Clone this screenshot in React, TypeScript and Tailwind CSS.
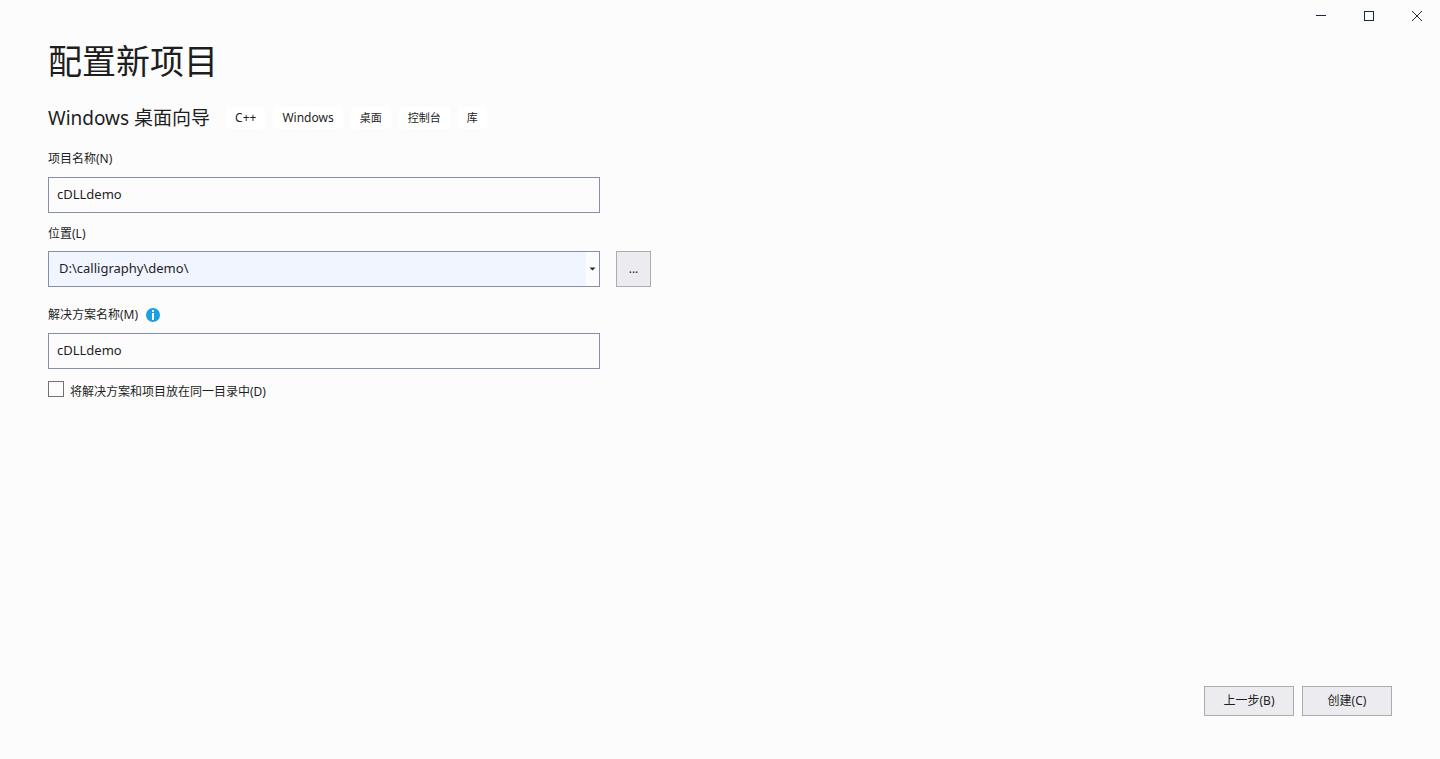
import { useState } from 'react';

const TAGS = [
  { name: 'C++', size: 'text-xs' },
  { name: 'Windows', size: 'text-xs' },
  { name: '桌面', size: 'text-[11px]' },
  { name: '控制台', size: 'text-[11px]' },
  { name: '库', size: 'text-[11px]' },
];

const fieldClass =
  'block h-9 w-full rounded-none border border-[#858fa8] bg-[#fcfcfc] px-2 pb-0.5 text-[13px] text-[#1e1e1e] outline-none';

const buttonClass =
  'border border-[#acacac] bg-[#ececf0] text-xs text-[#1e1e1e] hover:bg-[#dfe3f3]';

function WindowControls() {
  const base = 'flex h-8 w-12 items-center justify-center pl-0.5 text-[#1b293e] hover:bg-gray-200';
  return (
    <div className="flex justify-end">
      <button type="button" aria-label="最小化" className={base}>
        <svg width="10" height="10" viewBox="0 0 10 10" shapeRendering="crispEdges">
          <path d="M0 4.5h10" stroke="currentColor" />
        </svg>
      </button>
      <button type="button" aria-label="最大化" className={base}>
        <svg width="10" height="10" viewBox="0 0 10 10" shapeRendering="crispEdges">
          <rect x="0.5" y="0.5" width="9" height="9" fill="none" stroke="currentColor" />
        </svg>
      </button>
      <button type="button" aria-label="关闭" className={base}>
        <svg width="10" height="10" viewBox="0 0 10 10">
          <path d="M0 0l10 10M10 0L0 10" stroke="currentColor" />
        </svg>
      </button>
    </div>
  );
}

function InfoIcon() {
  return (
    <svg width="14" height="14" viewBox="0 0 14 14" aria-hidden="true">
      <circle cx="7" cy="7" r="7" fill="#1ba1e2" />
      <path d="M6 2h2v2H6zM6 5h2v7H6z" fill="#fff" />
    </svg>
  );
}

export default function App() {
  const [projectName, setProjectName] = useState('cDLLdemo');
  const [solutionName, setSolutionName] = useState('cDLLdemo');
  const [sameDir, setSameDir] = useState(false);

  return (
    <div className="flex min-h-screen flex-col bg-[#fcfcfc] font-['Noto_Sans','Noto_Sans_CJK_SC',sans-serif] text-[#1e1e1e]">
      <WindowControls />

      <main className="flex-1 px-12 pt-[9px]">
        <h1 className="text-[34px] leading-10">配置新项目</h1>

        <div className="mt-[23px] flex items-center gap-4">
          <h2 className="text-[19px] leading-7">Windows 桌面向导</h2>
          <ul className="flex gap-2">
            {TAGS.map((tag) => (
              <li key={tag.name} className={`rounded bg-white px-[9px] ${tag.size} leading-[22px]`}>
                {tag.name}
              </li>
            ))}
          </ul>
        </div>

        <div className="mt-[17px] max-w-[552px]">
          <label htmlFor="project-name" className="block text-xs leading-5">
            项目名称(N)
          </label>
          <input
            id="project-name"
            className={`${fieldClass} mt-2`}
            value={projectName}
            onChange={(e) => setProjectName(e.target.value)}
          />
        </div>

        <div className="mt-[11px]">
          <label htmlFor="location" className="block text-xs leading-5">
            位置(L)
          </label>
          <div className="mt-[7px] flex gap-4">
            <div className="relative w-full max-w-[552px]">
              <select
                id="location"
                className="block h-9 w-full appearance-none rounded-none border border-[#858fa8] bg-[#f0f5ff] pr-5 pl-2.5 text-[13px] outline-none"
              >
                <option>D:\calligraphy\demo\</option>
              </select>
              <span className="pointer-events-none absolute inset-y-px right-px flex w-[13px] items-center justify-center bg-[#fcfcfc]">
                <svg width="7" height="4" viewBox="0 0 7 4">
                  <path d="M0.5 0.5h6L3.5 3.5z" fill="#1b293e" />
                </svg>
              </span>
            </div>
            <button type="button" aria-label="浏览" className={`${buttonClass} w-[35px] shrink-0`}>
              ...
            </button>
          </div>
        </div>

        <div className="mt-[18px] max-w-[552px]">
          <div className="flex items-center gap-2">
            <label htmlFor="solution-name" className="text-xs leading-5">
              解决方案名称(M)
            </label>
            <InfoIcon />
          </div>
          <input
            id="solution-name"
            className={`${fieldClass} mt-2`}
            value={solutionName}
            onChange={(e) => setSolutionName(e.target.value)}
          />
        </div>

        <label className="mt-3 flex w-fit items-start gap-1.5 text-xs leading-[22px]">
          <input
            type="checkbox"
            className="size-4 appearance-none border border-[#717171] bg-[#fcfcfc] checked:bg-[#1b293e]"
            checked={sameDir}
            onChange={(e) => setSameDir(e.target.checked)}
          />
          将解决方案和项目放在同一目录中(D)
        </label>
      </main>

      <footer className="flex justify-end gap-2 px-12 pb-[43px]">
        <button type="button" className={`${buttonClass} h-[30px] w-[90px]`}>
          上一步(B)
        </button>
        <button type="button" className={`${buttonClass} h-[30px] w-[90px]`}>
          创建(C)
        </button>
      </footer>
    </div>
  );
}
